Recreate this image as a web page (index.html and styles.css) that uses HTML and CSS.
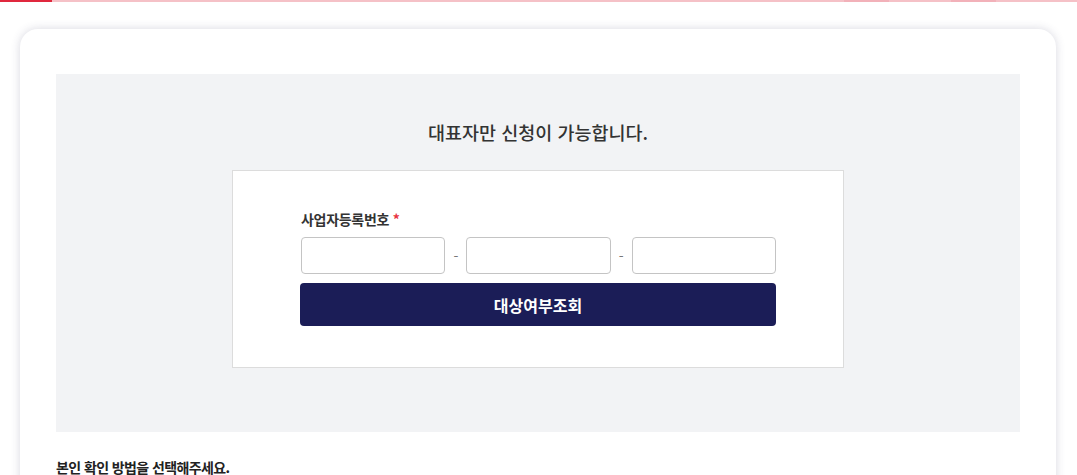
FILE: index.html
```html
<!DOCTYPE html>
<html lang="ko">
<head>
<meta charset="utf-8">
<title>대표자 확인</title>
<link rel="stylesheet" href="styles.css">
</head>
<body>
<div class="progress">
  <div class="progress-fill"></div>
  <div class="progress-rest"><span class="seg seg1"></span><span class="seg seg2"></span></div>
</div>
<main class="card">
  <section class="check-box">
    <h2 class="check-title">대표자만 신청이 가능합니다.</h2>
    <div class="form-box">
      <label class="field-label">사업자등록번호 <span class="req">*</span></label>
      <div class="biz-inputs">
        <input class="biz-input" type="text">
        <span class="dash">-</span>
        <input class="biz-input" type="text">
        <span class="dash">-</span>
        <input class="biz-input" type="text">
      </div>
      <button class="submit-btn" type="button">대상여부조회</button>
    </div>
  </section>
  <p class="method-title">본인 확인 방법을 선택해주세요.</p>
</main>
</body>
</html>
```
FILE: styles.css
```css
html, body {
  margin: 0;
  padding: 0;
  background: #ffffff;
  font-family: "Noto Sans CJK KR", "Noto Sans", sans-serif;
  color: #222;
  overflow: hidden;
}
.progress {
  display: flex;
  height: 2px;
}
.progress-fill {
  width: 52px;
  background: #e0283d;
}
.progress-rest {
  flex: 1;
  background: #f5c1c7;
  position: relative;
}
.seg {
  position: absolute;
  top: 0;
  height: 2px;
  background: #f2b1b9;
}
.seg1 { left: 792px; width: 45px; }
.seg2 { left: 899px; width: 45px; }
.card {
  margin: 27px 21px 0 20px;
  background: #fff;
  border-radius: 18px;
  box-shadow: 0 0 10px rgba(60, 60, 100, 0.2);
  padding: 45px 36px 40px;
  min-height: 500px;
}
.check-box {
  background: #f2f3f5;
  padding: 45px 0 64px;
  display: flex;
  flex-direction: column;
  align-items: center;
}
.check-title {
  margin: 0;
  font-size: 18.5px;
  line-height: 26px;
  font-weight: 500;
  color: #333;
  letter-spacing: 0;
}
.form-box {
  margin-top: 25px;
  width: 476px;
  padding: 39px 67px 41px;
  background: #fff;
  border: 1px solid #dcdcdc;
  display: flex;
  flex-direction: column;
}
.field-label {
  font-size: 14px;
  line-height: 18px;
  font-weight: 700;
  color: #333;
  letter-spacing: -0.3px;
  padding-left: 1px;
}
.req {
  color: #e8333f;
}
.biz-inputs {
  display: flex;
  align-items: center;
  margin-top: 9px;
  padding-left: 1px;
}
.biz-input {
  flex: 1;
  min-width: 0;
  height: 37px;
  box-sizing: border-box;
  border: 1px solid #c4c4c4;
  border-radius: 4px;
  background: #fff;
  margin: 0;
}
.dash {
  width: 21px;
  text-align: center;
  color: #777;
  font-size: 14px;
}
.submit-btn {
  margin-top: 9px;
  height: 43px;
  border: none;
  border-radius: 4px;
  background: #1b1d57;
  color: #fff;
  font-family: "Noto Sans CJK KR", "Noto Sans", sans-serif;
  font-size: 16px;
  font-weight: 700;
  letter-spacing: 0;
}
.method-title {
  margin: 25px 0 0;
  font-size: 14px;
  line-height: 20px;
  font-weight: 700;
  color: #222;
  letter-spacing: -0.6px;
}
```
